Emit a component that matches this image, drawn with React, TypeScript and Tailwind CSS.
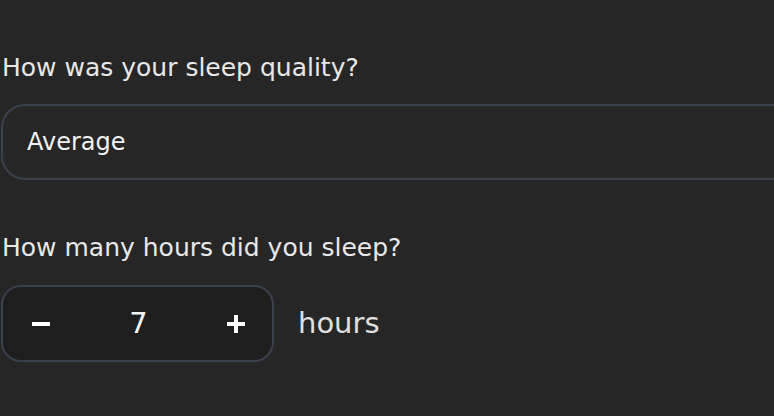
export default function App() {
  return (
    <div
      className="h-[416px] w-[774px] overflow-hidden bg-[#262626] pl-px pt-[52px] text-[#e8e8e8]"
      style={{ fontFamily: '"DejaVu Sans", "Noto Sans", sans-serif' }}
    >
      <p className="text-[25px] leading-[32px] pl-px">How was your sleep quality?</p>
      <div className="mt-[20px] flex h-[76px] w-[830px] items-center rounded-[24px] border-2 border-[#3a414d] px-[24px]">
        <span className="text-[24px] text-[#f2f2f2]">Average</span>
      </div>

      <p className="mt-[52px] text-[25px] leading-[32px] pl-px">How many hours did you sleep?</p>
      <div className="mt-[21px] flex items-center">
        <div className="flex h-[77px] w-[273px] items-center justify-between rounded-[20px] border-2 border-[#3a414d] bg-[#1e1e1e] pl-[18px] pr-[16px]">
          <button className="flex h-[40px] w-[40px] items-center justify-center">
            <svg width="18" height="18" viewBox="0 0 18 18">
              <rect x="0" y="7" width="18" height="4" fill="#ffffff" />
            </svg>
          </button>
          <span className="text-[29px] text-[#f5f5f5]">7</span>
          <button className="flex h-[40px] w-[40px] items-center justify-center">
            <svg width="18" height="18" viewBox="0 0 18 18">
              <rect x="0" y="7" width="18" height="4" fill="#ffffff" />
              <rect x="7" y="0" width="4" height="18" fill="#ffffff" />
            </svg>
          </button>
        </div>
        <span className="ml-[24px] text-[29px] text-[#e0e0e0]">hours</span>
      </div>
    </div>
  );
}
